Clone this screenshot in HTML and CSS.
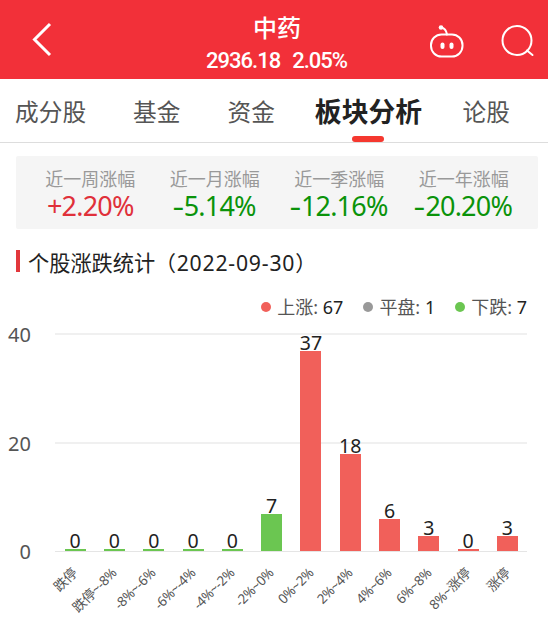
FILE: index.html
```
<!DOCTYPE html>
<html lang="zh-CN">
<head>
    <meta charset="UTF-8">
    <meta name="viewport" content="width=device-width, initial-scale=1.0">
    <title>中药</title>
    <link rel="stylesheet" href="styles.css">
</head>
<body>
    <header class="header">
        <svg class="back" viewBox="0 0 24 36"><path d="M20 3 L4.500 18.500 L20 34"/></svg>
        <div class="title">
            <h1>中药</h1>
            <p><span>2936.18</span><span>2.05%</span></p>
        </div>
        <div class="actions">
            <svg class="robot" viewBox="0 0 36 36">
                <rect x="3" y="10.500" width="31.500" height="22" rx="10.500"/>
                <path d="M13.500 3.500 Q18 4.500 19 10.500"/>
                <circle class="fill" cx="13" cy="3.500" r="2.300"/>
                <rect class="fill" x="12.500" y="18.500" width="4" height="6.500" rx="2"/>
                <rect class="fill" x="21.500" y="18.500" width="4" height="6.500" rx="2"/>
            </svg>
            <svg class="search" viewBox="0 0 36 36">
                <circle cx="17" cy="16.500" r="14.500"/>
                <path d="M27 26.500 L32.500 31"/>
            </svg>
        </div>
    </header>

    <nav class="tabs">
        <a class="tab">成分股</a>
        <a class="tab">基金</a>
        <a class="tab">资金</a>
        <a class="tab active">板块分析</a>
        <a class="tab">论股</a>
    </nav>

    <section class="stats">
        <div class="stat">
            <p class="stat-name">近一周涨幅</p>
            <p class="stat-value up">+2.20%</p>
        </div>
        <div class="stat">
            <p class="stat-name">近一月涨幅</p>
            <p class="stat-value down"><i>-</i>5.14%</p>
        </div>
        <div class="stat">
            <p class="stat-name">近一季涨幅</p>
            <p class="stat-value down"><i>-</i>12.16%</p>
        </div>
        <div class="stat">
            <p class="stat-name">近一年涨幅</p>
            <p class="stat-value down"><i>-</i>20.20%</p>
        </div>
    </section>

    <h2 class="section-title">个股涨跌统计<span>（2022-09-30）</span></h2>

    <div class="legend">
        <div class="legend-item red">上涨: <b>67</b></div>
        <div class="legend-item gray">平盘: <b>1</b></div>
        <div class="legend-item green">下跌: <b>7</b></div>
    </div>

    <div class="chart">
        <div class="axis">
            <span>40</span>
            <span>20</span>
            <span>0</span>
        </div>
        <div class="plot">
            <div class="grid"><div></div><div></div></div>
            <div class="bars">
                <div class="col green"><span>0</span><div class="bar" style="height: 2px"></div></div>
                <div class="col green"><span>0</span><div class="bar" style="height: 2px"></div></div>
                <div class="col green"><span>0</span><div class="bar" style="height: 2px"></div></div>
                <div class="col green"><span>0</span><div class="bar" style="height: 2px"></div></div>
                <div class="col green"><span>0</span><div class="bar" style="height: 2px"></div></div>
                <div class="col green"><span>7</span><div class="bar" style="height: 37px"></div></div>
                <div class="col red"><span>37</span><div class="bar" style="height: 200px"></div></div>
                <div class="col red"><span>18</span><div class="bar" style="height: 97px"></div></div>
                <div class="col red"><span>6</span><div class="bar" style="height: 32px"></div></div>
                <div class="col red"><span>3</span><div class="bar" style="height: 15px"></div></div>
                <div class="col red"><span>0</span><div class="bar" style="height: 2px"></div></div>
                <div class="col red"><span>3</span><div class="bar" style="height: 15px"></div></div>
            </div>
        </div>
    </div>

    <div class="labels">
        <div><span>跌停</span></div>
        <div><span>跌停~-8%</span></div>
        <div><span>-8%~-6%</span></div>
        <div><span>-6%~-4%</span></div>
        <div><span>-4%~-2%</span></div>
        <div><span>-2%~0%</span></div>
        <div><span>0%~2%</span></div>
        <div><span>2%~4%</span></div>
        <div><span>4%~6%</span></div>
        <div><span>6%~8%</span></div>
        <div><span>8%~涨停</span></div>
        <div><span>涨停</span></div>
    </div>
</body>
</html>
```
FILE: styles.css
```
* {
    margin: 0;
    padding: 0;
    box-sizing: border-box;
}

body {
    background-color: #fff;
    font-family: "Noto Sans", "Noto Sans CJK SC", sans-serif;
    color: #222;
    height: 627px;
    overflow: hidden;
}

/* header */
.header {
    height: 79px;
    background-color: #f23039;
    color: #fff;
    display: grid;
    grid-template-columns: 1fr 160px 1fr;
}

.header svg {
    fill: none;
    stroke: #fff;
    stroke-width: 2;
    stroke-linecap: round;
}

.header .fill {
    fill: #fff;
    stroke: none;
}

.header .back {
    width: 24px;
    height: 36px;
    margin: 21px 0 0 30px;
    stroke-width: 3;
    stroke-linecap: butt;
}

.title {
    margin-left: 6px;
    text-align: center;
    white-space: nowrap;
}

.title h1 {
    font-size: 24px;
    font-weight: 500;
    line-height: 30px;
    margin-top: 13px;
}

.title p {
    display: flex;
    justify-content: center;
    gap: 12px;
    font-family: Roboto, sans-serif;
    font-size: 22px;
    font-weight: 500;
    line-height: 26px;
    margin: 5px 0 0 -1px;
    letter-spacing: -1px;
}

.actions {
    display: flex;
    justify-content: flex-end;
    gap: 36px;
    padding: 24px 12px 0 0;
}

.actions svg {
    width: 36px;
    height: 36px;
}

/* tabs */
.tabs {
    height: 64px;
    padding-left: 15px;
    border-bottom: 1px solid #ddd;
    display: flex;
}

.tab {
    height: 63px;
    margin-right: 47px;
    font-size: 23.7px;
    line-height: 66px;
    color: #555;
    white-space: nowrap;
}

.tab:nth-child(3) {
    margin-right: 40px;
}

.tab.active {
    display: flex;
    flex-direction: column;
    align-items: center;
    margin-right: 40.5px;
    font-size: 26.8px;
    font-weight: bold;
    color: #222;
}

.tab.active::after {
    content: "";
    width: 32px;
    height: 6px;
    margin-top: -9px;
    border-radius: 3px;
    background-color: #f5382f;
    flex-shrink: 0;
}

/* period changes */
.stats {
    height: 73px;
    margin: 13px 10px 0 16px;
    padding: 0 12px;
    background-color: #f5f5f5;
    border-radius: 2px;
    display: flex;
}

.stat {
    flex: 1;
    text-align: center;
}

.stat-name {
    margin-top: 10px;
    font-size: 18px;
    line-height: 26px;
    color: #999;
}

.stat-value {
    font-size: 27px;
    line-height: 27px;
    letter-spacing: -0.8px;
    white-space: nowrap;
}

.stat-value i {
    display: inline-block;
    font-style: normal;
    transform: scaleX(1.35);
    margin-right: 2px;
}

.up {
    color: #e0303a;
}

.down {
    color: #0a930a;
}

.section-title {
    height: 22px;
    margin: 21px 0 0 16px;
    padding-left: 8px;
    border-left: 4px solid #e2373c;
    font-size: 21.2px;
    font-weight: normal;
    line-height: 25px;
}

.section-title span {
    letter-spacing: 0.8px;
    margin-left: -0.5px;
}

/* legend */
.legend {
    display: flex;
    justify-content: flex-end;
    gap: 20px;
    height: 26px;
    margin: 22px 21px 0 0;
    font-size: 18px;
    line-height: 26px;
    color: #555;
}

.legend-item {
    display: flex;
    align-items: center;
    gap: 6px;
    white-space: pre;
}

.legend-item::before {
    content: "";
    width: 10px;
    height: 10px;
    border-radius: 50%;
    background-color: var(--color);
}

.legend-item b {
    margin-left: -6px;
    font-weight: normal;
    color: #222;
}

.red {
    --color: #f1605a;
}

.green {
    --color: #6bc651;
}

.gray {
    --color: #999;
}

/* chart */
.chart {
    display: flex;
    height: 219px;
    margin-top: 13px;
    padding-right: 21px;
}

.axis {
    width: 55px;
    height: 243px;
    margin-top: -11px;
    padding-right: 24px;
    display: flex;
    flex-direction: column;
    justify-content: space-between;
    text-align: right;
    font-size: 20px;
    line-height: 26px;
    color: #555;
}

.plot {
    flex: 1;
    display: grid;
}

.grid,
.bars {
    grid-area: 1 / 1;
}

.grid {
    display: grid;
    grid-template-rows: 1fr 1fr;
    border-bottom: 1px solid #e5e5e5;
}

.grid div {
    border-top: 2px solid #f0f0f0;
}

.bars {
    display: flex;
    margin: 0 0 1px 0.5px;
}

.col {
    flex: 1;
    display: flex;
    flex-direction: column;
    justify-content: flex-end;
    align-items: center;
    font-size: 19.5px;
    line-height: 17px;
}

.bar {
    width: 21px;
    background-color: var(--color);
}

.labels {
    display: flex;
    margin: 12px 21px 0 55px;
}

.labels div {
    flex: 1;
    width: 0;
    padding-right: 26px;
    display: flex;
    justify-content: flex-end;
}

.labels span {
    font-size: 13.5px;
    line-height: 18px;
    letter-spacing: -0.4px;
    white-space: nowrap;
    color: #555;
    transform: rotate(-45deg);
    transform-origin: top right;
}
```
